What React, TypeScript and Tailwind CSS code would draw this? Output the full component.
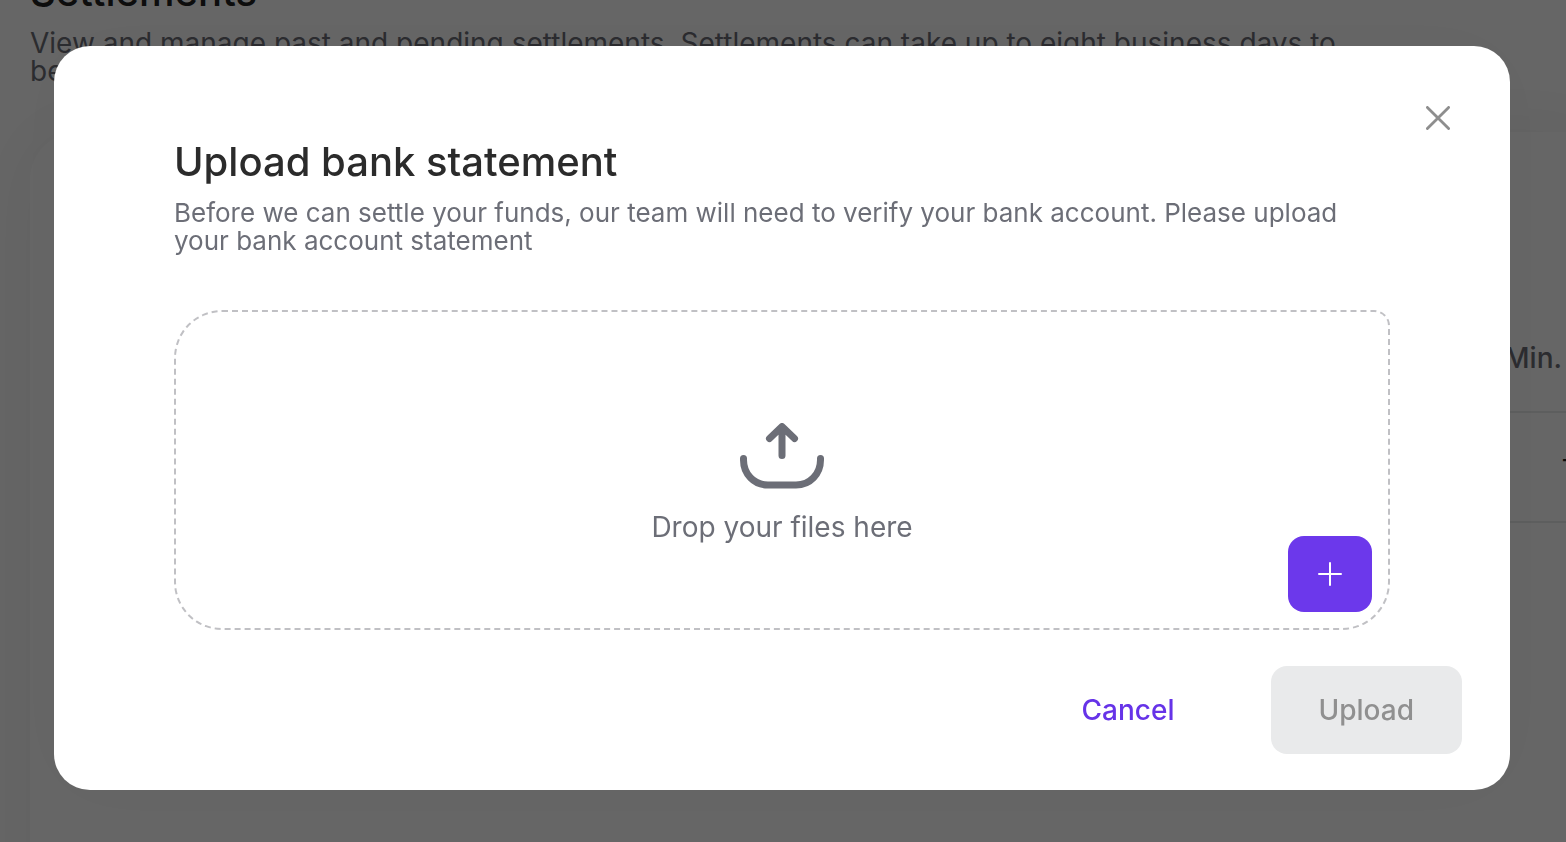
import { useState } from "react"

interface HeadingProps {
  title: string
  text: string
  titleClass: string
  textClass: string
}

function Heading({ title, text, titleClass, textClass }: HeadingProps) {
  return (
    <div>
      <h2 className={`text-[40px] leading-[48px] font-medium ${titleClass}`}>{title}</h2>
      <p className={`mt-[13px] leading-7 text-[#6c6e77] ${textClass}`}>{text}</p>
    </div>
  )
}

function Settlements() {
  return (
    <main className="h-screen overflow-hidden bg-white">
      <div className="-mt-8 max-w-[1400px] px-[30px]">
        <Heading
          title="Settlements"
          titleClass="text-[#222222]"
          text="View and manage past and pending settlements. Settlements can take up to eight business days to be"
          textClass="text-[28px]"
        />
      </div>

      <section className="mt-[47px] -mr-12 ml-[30px] min-h-screen rounded-[48px] bg-white px-12 pt-[172px] shadow-[0_0_80px_rgba(0,0,0,0.06)]">
        <table className="-mr-12 w-[calc(100%+48px)] text-right text-[28px] text-[#6c6e77]">
          <thead>
            <tr className="h-[108px] border-b-2 border-[#e9eaeb]">
              <th className="pr-[52px] font-medium">Min.</th>
            </tr>
          </thead>
          <tbody>
            <tr className="h-[110px] border-b-2 border-[#e9eaeb]">
              <td className="pr-10 pb-4 text-[#222222]">-</td>
            </tr>
          </tbody>
        </table>
      </section>
    </main>
  )
}

function UploadIcon() {
  return (
    <svg
      width="84"
      height="66"
      viewBox="0 0 84 66"
      fill="none"
      stroke="currentColor"
      strokeWidth="7"
      strokeLinecap="round"
      strokeLinejoin="round"
      aria-hidden="true"
    >
      <path d="M42 32.500V4M29.500 15.500L42 3.500L54.500 15.500" />
      <path d="M3.500 35.500V37C3.500 51 14 62 28 62H56C70 62 80.500 51 80.500 37V35.500" />
    </svg>
  )
}

export default function App() {
  const [open, setOpen] = useState(true)

  return (
    <div className="font-['Inter',sans-serif]">
      <Settlements />

      {open && (
        <div className="fixed inset-0 overflow-y-auto bg-black/60 pt-[46px] pr-14 pb-12 pl-[54px]">
          <div
            role="dialog"
            aria-modal="true"
            aria-label="Upload bank statement"
            className="rounded-[36px] bg-white pt-14 pb-9 shadow-[0_0_80px_rgba(0,0,0,0.04)]"
          >
            <div className="flex h-9 items-start justify-end pr-14">
              <button type="button" aria-label="Close" onClick={() => setOpen(false)} className="p-1 text-[#8e8e8e]">
                <svg width="24" height="24" viewBox="0 0 24 24" stroke="currentColor" strokeWidth="2.800" strokeLinecap="round">
                  <path d="M1.400 1.400L22.600 22.600M22.600 1.400L1.400 22.600" />
                </svg>
              </button>
            </div>

            <div className="px-[120px]">
              <Heading
                title="Upload bank statement"
                titleClass="text-[#2b2b2b]"
                text="Before we can settle your funds, our team will need to verify your bank account. Please upload your bank account statement"
                textClass="text-[26px]"
              />

              {/* Drop zone */}
              <div className="relative mt-[55px] flex h-80 flex-col items-center justify-center rounded-[48px] rounded-tr-[16px] border-2 border-dashed border-[#c0c0c4] pt-7 text-[#6c6e77]">
                <UploadIcon />
                <p className="mt-5 text-[28px] leading-9">Drop your files here</p>
                <button
                  type="button"
                  aria-label="Add file"
                  className="absolute right-4 bottom-4 flex h-[76px] w-[84px] items-center justify-center rounded-2xl bg-[#6c38eb] text-white"
                >
                  <svg width="24" height="24" viewBox="0 0 24 24" stroke="currentColor" strokeWidth="2" strokeLinecap="round">
                    <path d="M12 1V23M1 12H23" />
                  </svg>
                </button>
              </div>
            </div>

            {/* Actions */}
            <div className="mt-9 flex justify-end pr-12 text-[28px] font-medium">
              <button type="button" onClick={() => setOpen(false)} className="mr-12 h-[88px] px-12 text-[#6633e8]">
                Cancel
              </button>
              <button type="button" disabled className="h-[88px] rounded-2xl bg-[#e9eaeb] px-12 text-[#909090]">
                Upload
              </button>
            </div>
          </div>
        </div>
      )}
    </div>
  )
}
